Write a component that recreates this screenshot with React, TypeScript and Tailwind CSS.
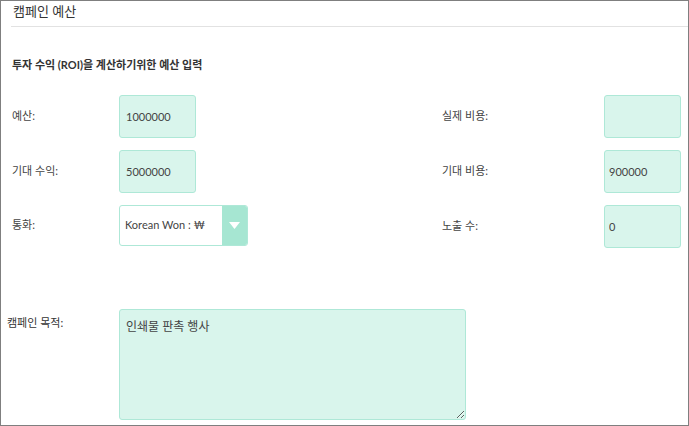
import { useState } from 'react';

const font = { fontFamily: "Lato, 'Noto Sans CJK KR', sans-serif" };

const Field = ({ label, value }: { label: string; value: string }) => (
  <div className="flex items-center">
    <div className="w-[107px] text-[11px] text-[#444]">{label}</div>
    <input
      defaultValue={value}
      className="w-[77px] h-[43px] rounded-[3px] border border-[#aee8d7] bg-[#d9f5ec] px-[6px] text-[11px] text-[#444] outline-none"
    />
  </div>
);

const RightField = ({ label, value }: { label: string; value: string }) => (
  <div className="flex items-center">
    <div className="w-[162px] text-[11px] text-[#444]">{label}</div>
    <input
      defaultValue={value}
      className="w-[77px] h-[43px] rounded-[3px] border border-[#aee8d7] bg-[#d9f5ec] px-[4px] text-[11px] text-[#444] outline-none"
    />
  </div>
);

export default function App() {
  const [goal, setGoal] = useState('인쇄물 판촉 행사');

  return (
    <div className="w-[689px] h-[426px] bg-white border border-[#7f7f7f] overflow-hidden" style={font}>
      <div className="ml-[10px] h-[26px] border-b border-[#e2e2e2] pl-[2px] pt-[1px] text-[13px] leading-[18px] text-[#333]">
        캠페인 예산
      </div>
      <div className="pl-[11px] pr-[7px]">
        <div className="mt-[31px] text-[11px] font-bold leading-[14px] text-[#333]">
          투자 수익 (ROI)을 계산하기위한 예산 입력
        </div>

        <div className="mt-[23px] flex justify-between">
          <div className="flex flex-col gap-[12px]">
            <Field label="예산:" value="1000000" />
            <Field label="기대 수익:" value="5000000" />
            <div className="flex items-center">
              <div className="w-[107px] text-[11px] text-[#444]">통화:</div>
              <div className="flex h-[41px] w-[129px] overflow-hidden rounded-[3px] border border-[#aee8d7] bg-white">
                <div className="flex flex-1 items-center pl-[5px] text-[11px] text-[#444]">Korean Won : ₩</div>
                <div className="flex w-[25px] items-center justify-center bg-[#a6e6d2]">
                  <svg width="11" height="7" viewBox="0 0 11 7">
                    <path d="M0 0 L11 0 L5.5 7 Z" fill="#ffffff" />
                  </svg>
                </div>
              </div>
            </div>
          </div>
          <div className="flex flex-col gap-[12px]">
            <RightField label="실제 비용:" value="" />
            <RightField label="기대 비용:" value="900000" />
            <RightField label="노출 수:" value="0" />
          </div>
        </div>

        <div className="mt-[61px] -ml-[5px] flex items-start">
          <div className="w-[112px] pt-[6px] text-[11px] text-[#333]">캠페인 목적:</div>
          <textarea
            value={goal}
            onChange={(e) => setGoal(e.target.value)}
            className="h-[111px] w-[347px] rounded-[3px] border border-[#aee8d7] bg-[#d9f5ec] px-[6px] py-[8px] text-[12px] text-[#444] outline-none"
          />
        </div>
      </div>
    </div>
  );
}
